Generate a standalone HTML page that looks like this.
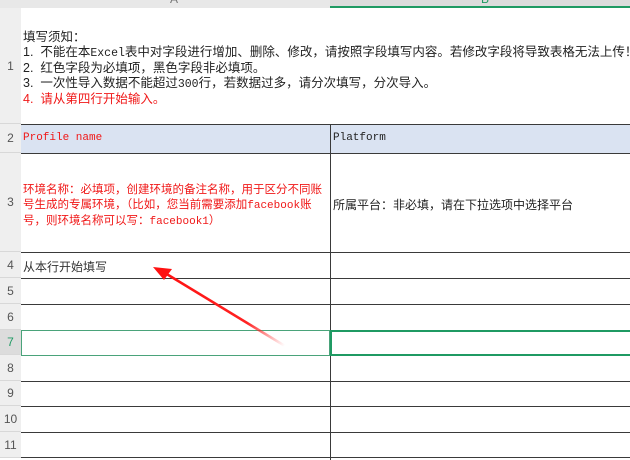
<!DOCTYPE html>
<html><head><meta charset="utf-8"><style>
*{margin:0;padding:0;box-sizing:border-box}
body{width:630px;height:460px;overflow:hidden;background:#fff;position:relative;font-family:"Liberation Sans","Noto Sans CJK SC",sans-serif;font-size:12px;color:#222}
.a{position:absolute}
.hl{position:absolute;left:21px;width:609px;height:1px;background:#3a3a3a}
.rn{position:absolute;left:0;width:21px;background:#efefef;color:#555;font-size:12px;text-align:center;border-bottom:1px solid #d8d8d8}
.mono{font-family:"Liberation Mono","Noto Sans CJK SC",monospace;font-size:11px}
.m{font-family:"Liberation Mono",monospace}
.red{color:#f01818}
</style></head><body>
<div class="a" style="left:0;top:0;width:630px;height:8px;background:#e8e8e8"></div>
<div class="a" style="left:330px;top:0;width:300px;height:8px;background:#dcdcdc;border-bottom:2px solid #1f9a63"></div>
<div class="a" style="left:170px;top:-8px;color:#777;font-size:12px">A</div>
<div class="a" style="left:481px;top:-8px;color:#1f9a63;font-size:12px">B</div>
<div class="rn" style="top:8px;height:116px;line-height:116px">1</div>
<div class="rn" style="top:124px;height:29px;line-height:29px">2</div>
<div class="rn" style="top:153px;height:99px;line-height:99px">3</div>
<div class="rn" style="top:252px;height:26px;line-height:26px">4</div>
<div class="rn" style="top:278px;height:26px;line-height:26px">5</div>
<div class="rn" style="top:304px;height:26px;line-height:26px">6</div>
<div class="rn" style="top:330px;height:25px;line-height:25px;background:#dcdcdc;color:#1f9a63">7</div>
<div class="rn" style="top:355px;height:26px;line-height:26px">8</div>
<div class="rn" style="top:381px;height:25px;line-height:25px">9</div>
<div class="rn" style="top:406px;height:26px;line-height:26px">10</div>
<div class="rn" style="top:432px;height:26px;line-height:26px">11</div>
<div class="a" style="left:21px;top:124px;width:609px;height:29px;background:#dae3f2"></div>
<div class="hl" style="top:124px"></div>
<div class="hl" style="top:153px"></div>
<div class="hl" style="top:252px"></div>
<div class="hl" style="top:278px"></div>
<div class="hl" style="top:304px"></div>
<div class="hl" style="top:330px"></div>
<div class="hl" style="top:355px"></div>
<div class="hl" style="top:381px"></div>
<div class="hl" style="top:406px"></div>
<div class="hl" style="top:432px"></div>
<div class="hl" style="top:457px"></div>
<div class="a" style="left:330px;top:124px;width:1px;height:336px;background:#3a3a3a"></div>
<div class="a" style="left:21px;top:330px;width:309px;height:26px;border:1px solid #4aa37a"></div>
<div class="a" style="left:330px;top:330px;width:300px;height:26px;border:2px solid #1f9a63;border-right:none"></div>
<div class="a" style="left:23px;top:30px;line-height:15px;white-space:nowrap;font-size:12.5px">
填写须知：<br>
1.&nbsp; 不能在本<span class="m" style="font-size:11.5px">Excel</span>表中对字段进行增加、删除、修改，请按照字段填写内容。若修改字段将导致表格无法上传！<br>
2.&nbsp; 红色字段为必填项，黑色字段非必填项。<br>
3.&nbsp; 一次性导入数据不能超过<span class="m" style="font-size:11.5px">300</span>行，若数据过多，请分次填写，分次导入。<br>
<span class="red">4.&nbsp; 请从第四行开始输入。</span>
</div>
<div class="a mono red" style="left:23px;top:132px">Profile name</div>
<div class="a mono" style="left:333px;top:132px">Platform</div>
<div class="a red" style="left:23px;top:183px;line-height:15px;font-size:11.5px;white-space:nowrap">环境名称：必填项，创建环境的备注名称，用于区分不同账<br>号生成的专属环境，（比如，您当前需要添加<span class="m" style="font-size:11px">facebook</span>账<br>号，则环境名称可以写：<span class="m" style="font-size:11px">facebook1</span>）</div>
<div class="a" style="left:333px;top:196px">所属平台：非必填，请在下拉选项中选择平台</div>
<div class="a" style="left:23px;top:258px;color:#333">从本行开始填写</div>
<svg class="a" style="left:0;top:0" width="630" height="460">
<defs><linearGradient id="g" x1="285" y1="345" x2="160" y2="270" gradientUnits="userSpaceOnUse"><stop offset="0" stop-color="#f33" stop-opacity="0"/><stop offset="0.3" stop-color="#f22"/><stop offset="1" stop-color="#f11"/></linearGradient></defs>
<line x1="285" y1="346" x2="165" y2="273" stroke="url(#g)" stroke-width="2.5"/>
<polygon points="153,267 172,269 164,280" fill="#f11"/>
</svg>
</body></html>
